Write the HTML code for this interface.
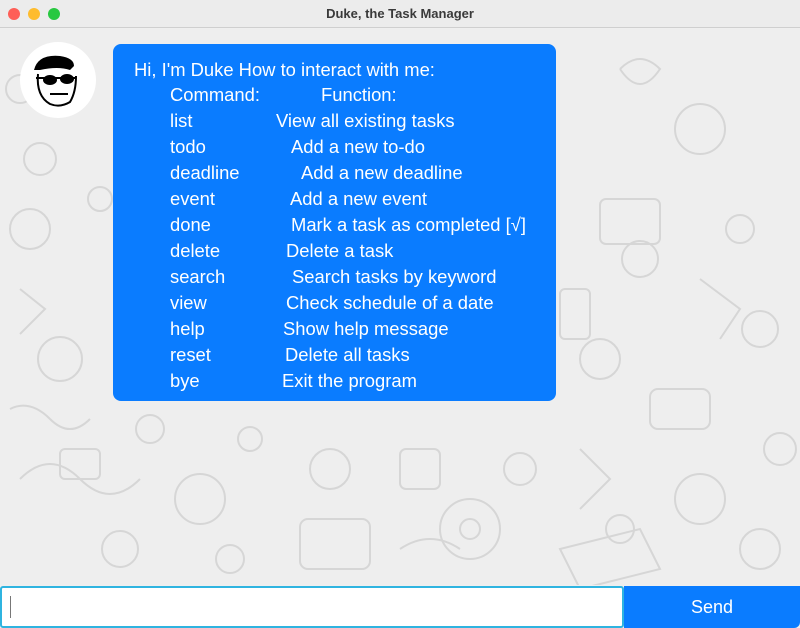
<!DOCTYPE html>
<html><head><meta charset="utf-8"><style>
*{margin:0;padding:0;box-sizing:border-box}
body{width:800px;height:628px;overflow:hidden;background:#efefef;font-family:"Liberation Sans",sans-serif;position:relative}
.title{position:absolute;left:0;top:0;width:800px;height:28px;background:#ececec;border-bottom:1px solid #cfcfcf;text-align:center;font-size:13px;font-weight:bold;color:#3a3a3a;line-height:28px}
.dot{position:absolute;top:8px;width:12px;height:12px;border-radius:50%}
.chat{position:absolute;left:0;top:29px;width:800px;height:556px;background:#eeeeee}
.av{position:absolute;left:20px;top:42px;width:76px;height:76px;border-radius:50%;background:#fff}
.bub{position:absolute;left:113px;top:44px;width:443px;height:357px;background:#0a7cff;border-radius:8px;color:#fff;font-size:18.4px}
.bub div{position:absolute;white-space:nowrap;line-height:26px}
.inp{position:absolute;left:0;top:586px;width:624px;height:42px;background:#fff;border:2px solid #2fb4e0;border-radius:3px}
.cur{position:absolute;left:8px;top:8px;width:1px;height:22px;background:#777}
.send{position:absolute;left:624px;top:586px;width:176px;height:42px;background:#0a7cff;border-radius:0 0 6px 0;color:#fff;font-size:18px;text-align:center;line-height:42px}
</style></head><body>
<div class="title">Duke, the Task Manager</div>
<div class="dot" style="left:8px;background:#fe5f57"></div>
<div class="dot" style="left:28px;background:#febc2e"></div>
<div class="dot" style="left:48px;background:#28c840"></div>
<div class="chat">
<svg width="800" height="556" style="position:absolute;left:0;top:0" fill="none" stroke="#d6d6d6" stroke-width="2">
<circle cx="30" cy="200" r="20"/><circle cx="700" cy="100" r="25"/><circle cx="640" cy="230" r="18"/><rect x="600" y="170" width="60" height="45" rx="6"/><circle cx="60" cy="330" r="22"/><path d="M20 450 q30-30 60 0 t60 0"/><circle cx="200" cy="470" r="25"/><circle cx="330" cy="440" r="20"/><rect x="300" y="490" width="70" height="50" rx="8"/><circle cx="470" cy="500" r="30"/><circle cx="470" cy="500" r="10"/><path d="M580 420 l30 30 l-30 30"/><circle cx="700" cy="470" r="25"/><rect x="650" y="360" width="60" height="40" rx="8"/><circle cx="760" cy="300" r="18"/><path d="M560 520 l80 -20 l20 40 l-80 20z"/><circle cx="120" cy="520" r="18"/><path d="M620 40 q20 -20 40 0 q-20 30 -40 0"/><circle cx="250" cy="410" r="12"/><rect x="400" y="420" width="40" height="40" rx="6"/><circle cx="740" cy="200" r="14"/><path d="M20 260 l25 20 l-25 25"/><circle cx="520" cy="440" r="16"/>
<circle cx="40" cy="130" r="16"/><path d="M10 380 q20-10 40 10 t40 0"/><rect x="60" y="420" width="40" height="30" rx="5"/><circle cx="230" cy="530" r="14"/><circle cx="600" cy="330" r="20"/><path d="M700 250 l40 30 l-20 30"/><circle cx="780" cy="420" r="16"/><rect x="560" y="260" width="30" height="50" rx="5"/><circle cx="150" cy="400" r="14"/><path d="M400 520 q30 -20 60 0"/><circle cx="620" cy="500" r="14"/><circle cx="760" cy="520" r="20"/><circle cx="20" cy="60" r="14"/><circle cx="100" cy="170" r="12"/>
</svg>
</div>
<div class="av">
<svg width="76" height="76" viewBox="0 0 76 76">
<path d="M14 28 q4-16 26-14 q14 2 14 10 l-4 4 q-12-4-30 0z" fill="#000"/>
<path d="M18 32 q-2 22 12 30 q10 4 20-2 q6-10 6-26" fill="#fff" stroke="#000" stroke-width="2"/>
<ellipse cx="30" cy="38" rx="7" ry="5" fill="#000"/><ellipse cx="47" cy="37" rx="7" ry="5" fill="#000"/>
<path d="M16 36 h40" stroke="#000" stroke-width="2"/>
<path d="M30 52 h18" stroke="#000" stroke-width="2"/>
</svg>
</div>
<div class="bub">
<div style="left:21px;top:13px">Hi, I'm Duke How to interact with me:</div>
<div style="left:57px;top:38px">Command:</div><div style="left:208px;top:38px">Function:</div>
<div style="left:57px;top:64px">list</div><div style="left:163px;top:64px">View all existing tasks</div>
<div style="left:57px;top:90px">todo</div><div style="left:178px;top:90px">Add a new to-do</div>
<div style="left:57px;top:116px">deadline</div><div style="left:188px;top:116px">Add a new deadline</div>
<div style="left:57px;top:142px">event</div><div style="left:177px;top:142px">Add a new event</div>
<div style="left:57px;top:168px">done</div><div style="left:178px;top:168px">Mark a task as completed [√]</div>
<div style="left:57px;top:194px">delete</div><div style="left:173px;top:194px">Delete a task</div>
<div style="left:57px;top:220px">search</div><div style="left:179px;top:220px">Search tasks by keyword</div>
<div style="left:57px;top:246px">view</div><div style="left:173px;top:246px">Check schedule of a date</div>
<div style="left:57px;top:272px">help</div><div style="left:170px;top:272px">Show help message</div>
<div style="left:57px;top:298px">reset</div><div style="left:172px;top:298px">Delete all tasks</div>
<div style="left:57px;top:324px">bye</div><div style="left:169px;top:324px">Exit the program</div>
</div>
<div class="inp"><div class="cur"></div></div>
<div class="send">Send</div>
</body></html>
